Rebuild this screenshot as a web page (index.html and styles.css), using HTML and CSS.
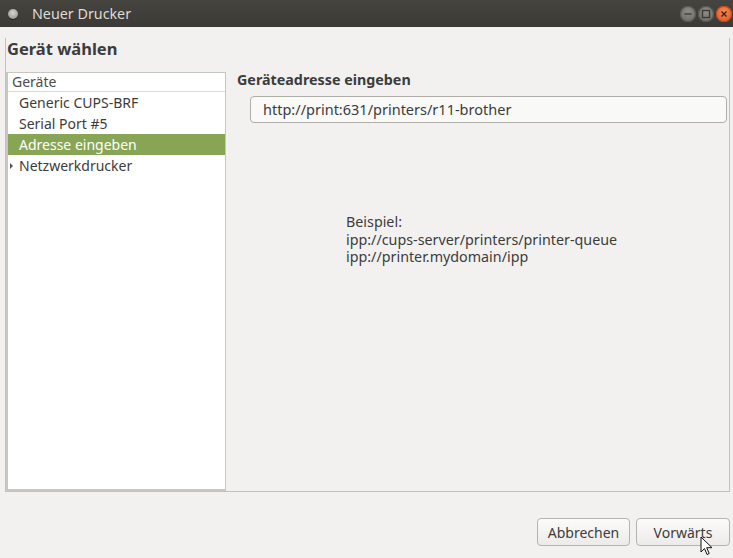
FILE: index.html
```html
<!DOCTYPE html>
<html>
<head>
<meta charset="utf-8">
<link rel="stylesheet" href="styles.css">
</head>
<body>
<div class="window">
  <div class="titlebar">
    <span class="menu-dot"></span>
    <span class="title">Neuer Drucker</span>
    <div class="wm-buttons">
      <span class="wm wm-min"><svg width="16" height="16" viewBox="0 0 16 16"><path d="M4.5 8h7" stroke="#3a3935" stroke-width="1.3"/></svg></span>
      <span class="wm wm-max"><svg width="16" height="16" viewBox="0 0 16 16"><rect x="4.5" y="4.5" width="7" height="7" fill="none" stroke="#3a3935" stroke-width="1.3"/></svg></span>
      <span class="wm wm-close"><svg width="16" height="16" viewBox="0 0 16 16"><path d="M5.5 5.5l5 5M10.5 5.5l-5 5" stroke="#3a2218" stroke-width="1.3"/></svg></span>
    </div>
  </div>
  <div class="frame">
    <h1 class="heading">Gerät wählen</h1>
    <div class="panes">
      <div class="tree">
        <div class="tree-header">Geräte</div>
        <div class="row">Generic CUPS-BRF</div>
        <div class="row">Serial Port #5</div>
        <div class="row selected">Adresse eingeben</div>
        <div class="row"><span class="expander"></span>Netzwerkdrucker</div>
      </div>
      <div class="detail">
        <div class="detail-title">Geräteadresse eingeben</div>
        <div class="entry">http://print:631/printers/r11-brother</div>
        <div class="example">
          <div>Beispiel:</div>
          <div>ipp://cups-server/printers/printer-queue</div>
          <div>ipp://printer.mydomain/ipp</div>
        </div>
      </div>
    </div>
  </div>
  <div class="actions">
    <button class="btn btn-cancel">Abbrechen</button>
    <button class="btn btn-next">Vorwärts
      <svg class="cursor" width="14" height="20" viewBox="0 0 14 20"><path d="M1 1v15l3.5-3.5 2.5 6 2.2-1-2.5-5.8H12z" fill="#fff" stroke="#111" stroke-width="1"/></svg>
    </button>
  </div>
</div>
</body>
</html>
```
FILE: styles.css
```css
* { box-sizing: border-box; }
html, body { margin: 0; padding: 0; }
body {
  width: 733px;
  height: 558px;
  background: #f2f1f0;
  font-family: "Noto Sans", "DejaVu Sans", sans-serif;
  font-size: 14px;
  color: #3c3c3c;
  overflow: hidden;
}
.window { width: 733px; height: 558px; display: flex; flex-direction: column; }
.titlebar {
  height: 27px;
  background: linear-gradient(#45443f, #3b3a36);
  display: flex;
  align-items: center;
  padding-left: 8px;
  flex-shrink: 0;
}
.menu-dot {
  width: 10px; height: 10px;
  border-radius: 50%;
  background: radial-gradient(circle at 50% 40%, #d8d6d0 0%, #a9a7a1 60%, #6a6964 100%);
  box-shadow: 0 1px 0 #24231f;
  margin-right: 14px;
}
.title { color: #dfdbd2; font-size: 14.3px; flex: 1; }
.wm-buttons { display: flex; gap: 2px; margin-right: 1px; }
.wm {
  width: 16px; height: 16px; border-radius: 50%;
  display: flex;
}
.wm-min, .wm-max { background: radial-gradient(circle at 50% 35%, #8d8c86, #65645f); box-shadow: inset 0 0 0 1px #55544f; }
.wm-close { background: radial-gradient(circle at 50% 35%, #f5894f, #e0501c); box-shadow: inset 0 0 0 1px #c2461a; }
.frame {
  margin: 11px 3px 0 5px;
  height: 454px;
  border: 1px solid #c4c1bb;
  border-top: none;
  display: flex;
  flex-direction: column;
}
.heading {
  margin: 0;
  padding: 0 0 0 1px;
  height: 34px;
  font-size: 16.5px;
  font-weight: bold;
  line-height: 22px;
  color: #3c3c3c;
}
.panes { flex: 1; display: flex; }
.tree {
  width: 220px;
  background: #fff;
  border: 1px solid #c9c6c1;
  border-bottom: 2px solid #c9c6c1;
  border-left: 2px solid #c9c6c1;
  margin-left: 0;
}
.tree-header {
  height: 19px;
  line-height: 18px;
  padding-left: 4px;
  border-bottom: 1px solid #dcdad5;
  color: #4c4c4c;
}
.row {
  height: 21px;
  line-height: 21px;
  padding-left: 11px;
  position: relative;
}
.row.selected { background: #87a554; color: #fff; }
.expander {
  position: absolute; left: 2px; top: 8px;
  width: 0; height: 0;
  border-left: 3px solid #555;
  border-top: 3px solid transparent;
  border-bottom: 3px solid transparent;
}
.detail { flex: 1; padding: 0 2px 0 11px; }
.detail-title { font-weight: bold; font-size: 14.3px; line-height: 18px; margin-top: -1px; }
.entry {
  margin: 7px 0 0 13px;
  height: 27px;
  border: 1px solid #b0aea9;
  border-radius: 4px;
  background: #f9f9f8;
  padding-left: 12px;
  line-height: 25px;
  font-size: 14.5px;
}
.example { margin: 90px 0 0 109px; line-height: 17.5px; font-size: 14.3px; }
.actions {
  display: flex;
  justify-content: flex-end;
  gap: 6px;
  padding: 26px 3px 0 0;
}
.btn {
  font-family: inherit;
  font-size: 14px;
  color: #3c3c3c;
  height: 28px;
  border: 1px solid #b6b3ae;
  border-radius: 4px;
  background: linear-gradient(#fbfbfa, #ecebea);
  padding: 0;
  position: relative;
}
.btn-cancel { width: 93px; }
.btn-next { width: 94px; }
.cursor { position: absolute; left: 63px; top: 17px; }
```
